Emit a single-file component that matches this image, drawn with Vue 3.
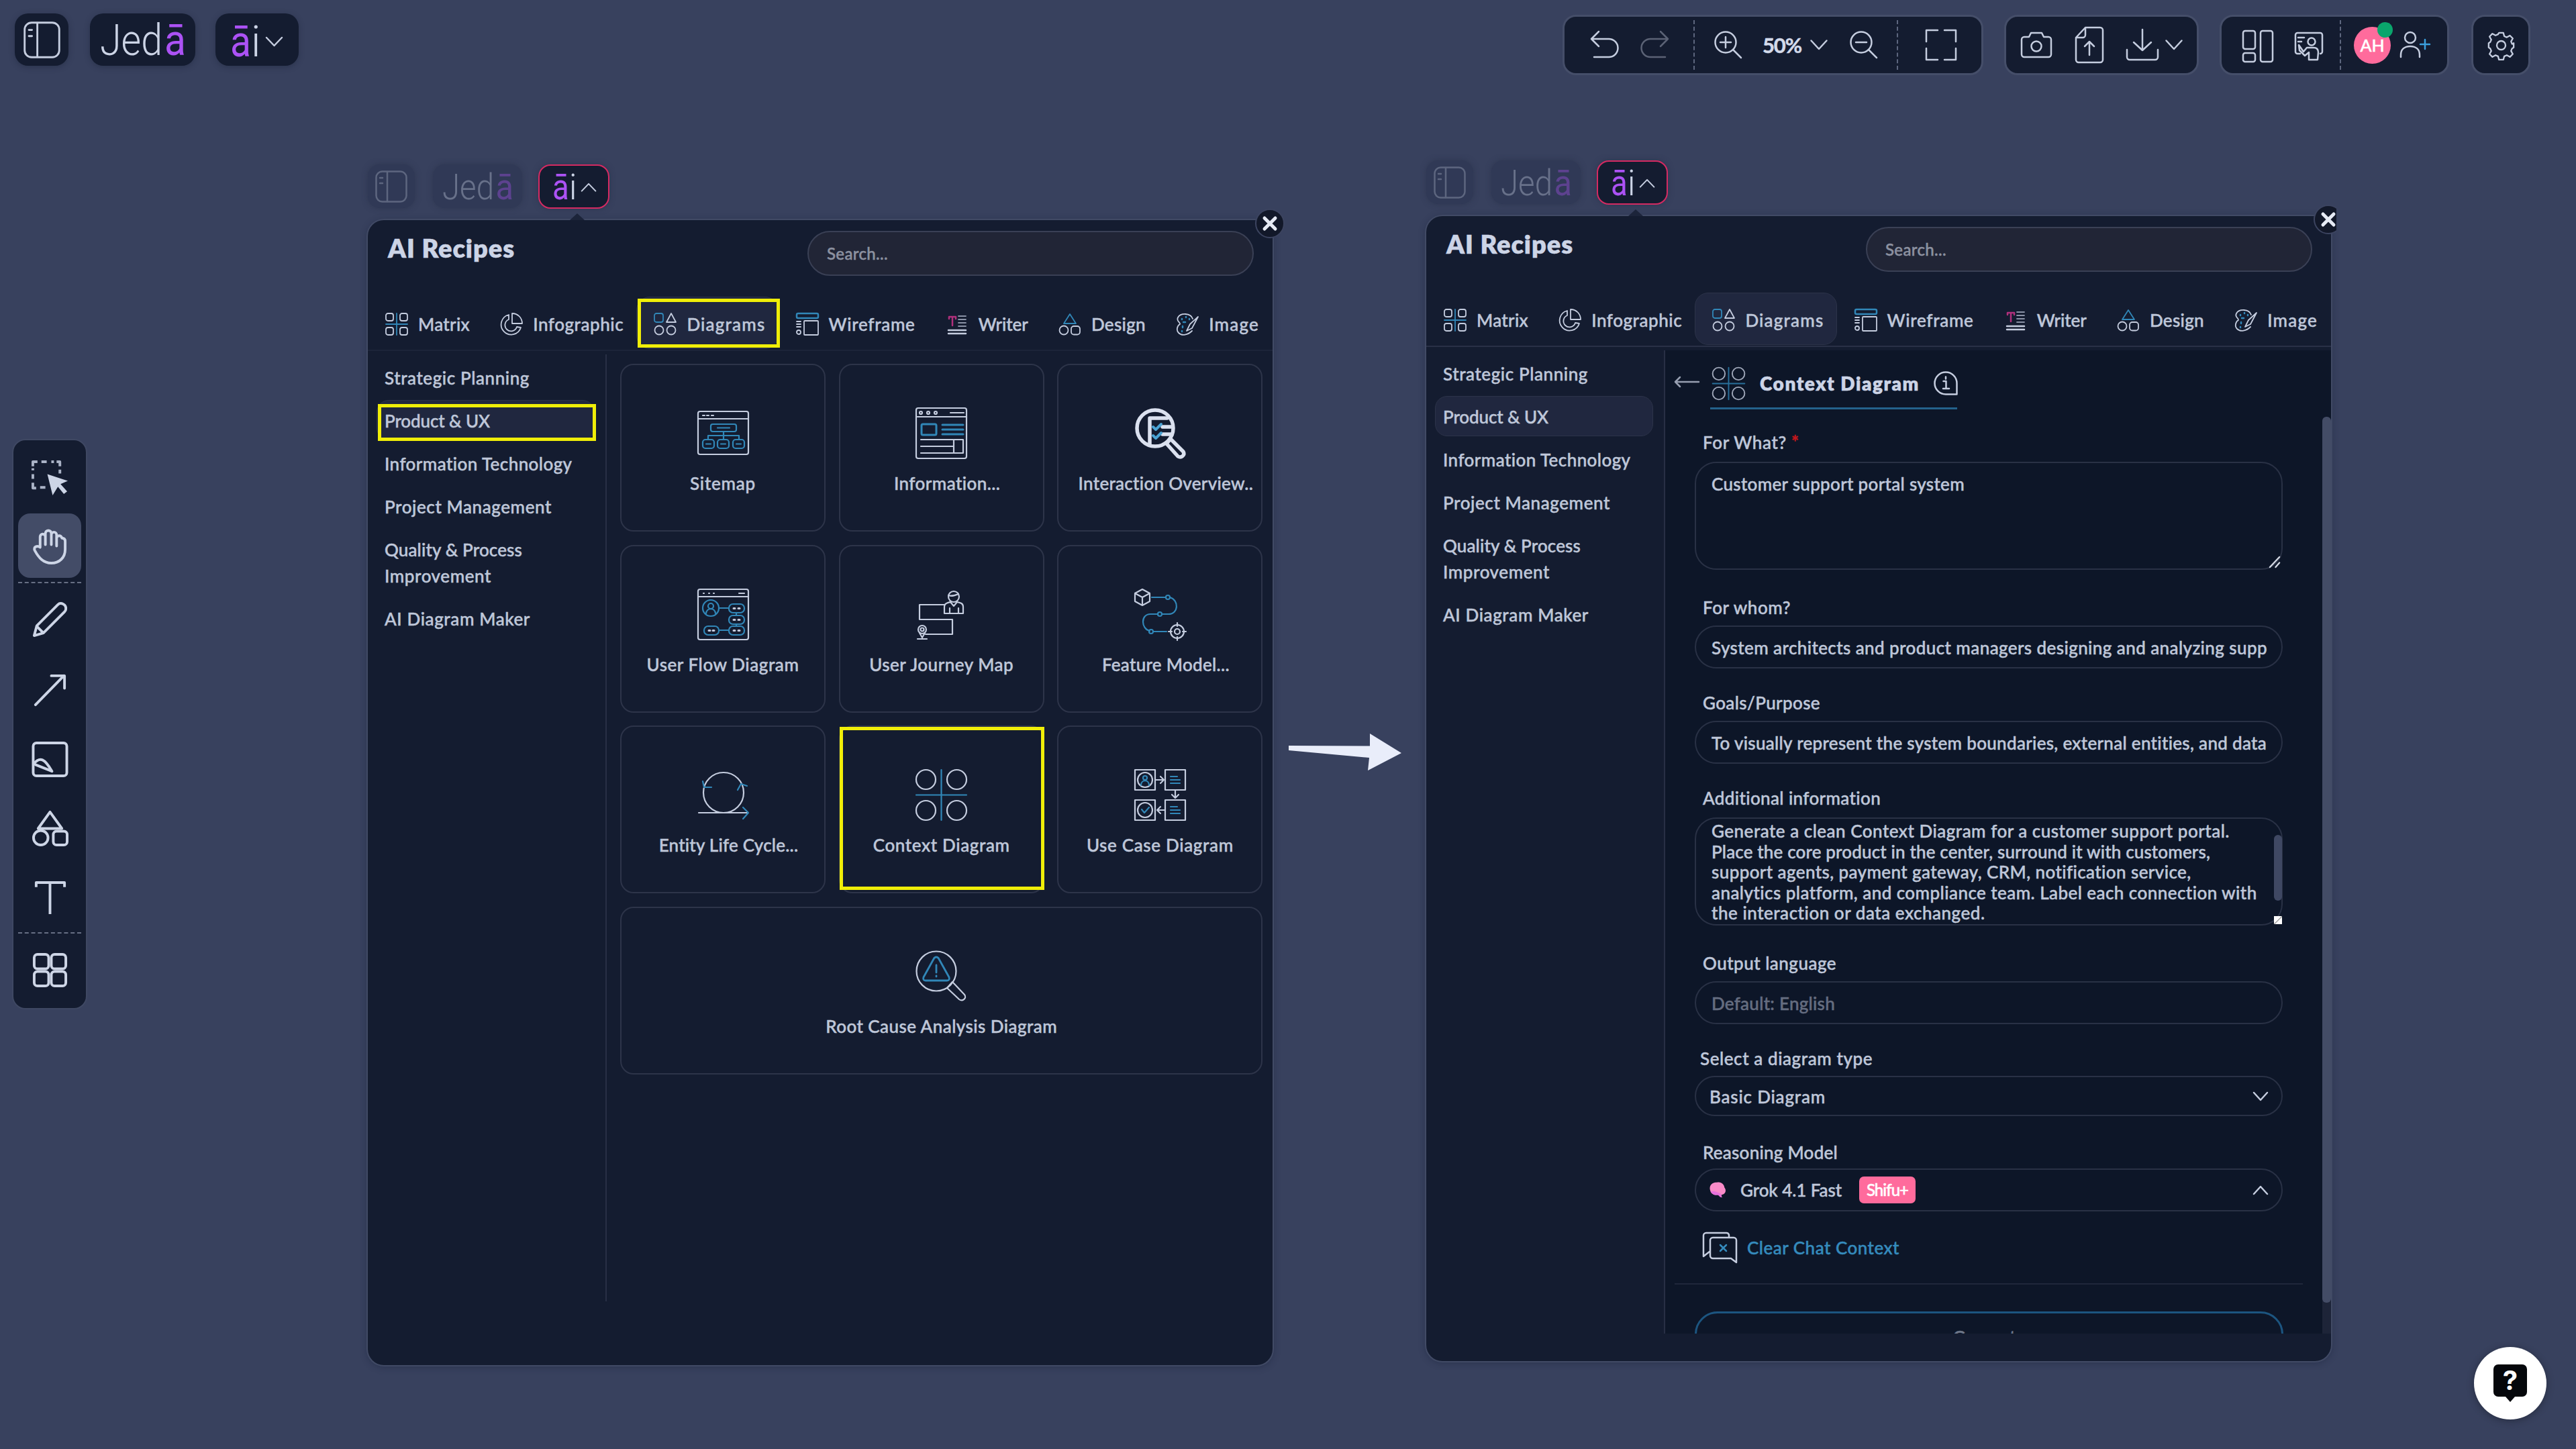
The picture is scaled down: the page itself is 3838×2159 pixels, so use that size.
<template>
  <div class="board">
    <header class="brand">
      <div class="chip chip-menu"><svg class="i55" viewBox="0 0 48 48" v-html="icons.sidebar"></svg></div>
      <div class="chip chip-logo">
        <svg class="logo" viewBox="0 0 128 70">
          <text x="0" y="58" textLength="93" lengthAdjust="spacingAndGlyphs">Jed</text>
          <text class="purple" x="96" y="58" textLength="32" lengthAdjust="spacingAndGlyphs">ā</text>
        </svg>
      </div>
      <div class="chip chip-ai">
        <svg class="ai" viewBox="0 0 80 70">
          <text class="purple" x="0" y="58" textLength="31" lengthAdjust="spacingAndGlyphs">ā</text>
          <text x="31" y="58">i</text>
          <path d="M54 30l11.500 12 11.500-12" />
        </svg>
      </div>
    </header>

    <div class="topbar">
      <div class="group g-zoom">
        <svg class="tb" viewBox="0 0 44 44" v-html="icons.undo"></svg>
        <svg class="tb dim" viewBox="0 0 44 44" v-html="icons.redo"></svg>
        <i class="vdash"></i>
        <svg class="tb" viewBox="0 0 44 44" v-html="icons.zoomIn"></svg>
        <span class="zoom"><span v-fit="58">50%</span></span>
        <svg class="chev" viewBox="0 0 26 16"><path d="M1.500 1.500L13 14 24.500 1.500" /></svg>
        <svg class="tb" viewBox="0 0 44 44" v-html="icons.zoomOut"></svg>
        <i class="vdash"></i>
        <svg class="tb-lg" viewBox="0 0 50 50" v-html="icons.expand"></svg>
      </div>
      <div class="group g-file">
        <svg class="tb-lg" viewBox="0 0 50 50" v-html="icons.camera"></svg>
        <svg class="tb-file" viewBox="0 0 44 56" v-html="icons.upload"></svg>
        <svg class="tb-lg" viewBox="0 0 50 50" v-html="icons.download"></svg>
        <svg class="chev" viewBox="0 0 26 16"><path d="M1.500 1.500L13 14 24.500 1.500" /></svg>
      </div>
      <div class="group g-team">
        <svg class="tb-lg" viewBox="0 0 50 50" v-html="icons.layout"></svg>
        <svg class="tb presenter" viewBox="0 0 44 44" v-html="icons.presenter"></svg>
        <i class="vdash tall"></i>
        <div class="avatar"><span v-fit="36">AH</span><i class="online"></i></div>
        <svg class="tb-lg invite" viewBox="0 0 50 50" v-html="icons.invite"></svg>
      </div>
      <div class="group g-gear">
        <svg viewBox="0 0 44 44" v-html="icons.gear"></svg>
      </div>
    </div>

    <nav class="tools">
      <template v-for="t in tools" :key="t.id">
        <i v-if="t.sep" class="hdash"></i>
        <div class="tool" :class="{ active: t.active }">
          <svg viewBox="0 0 56 56" v-html="icons[t.id]"></svg>
        </div>
      </template>
    </nav>

    <section v-for="p in panels" :key="p" class="shot" :class="'shot-' + p">
      <div class="mini">
        <div class="mchip mchip-menu"><svg viewBox="0 0 48 48" v-html="icons.sidebar"></svg></div>
        <div class="mchip mchip-logo">
          <svg viewBox="0 0 128 70">
            <text x="0" y="58" textLength="93" lengthAdjust="spacingAndGlyphs">Jed</text>
            <text class="purple" x="96" y="58" textLength="32" lengthAdjust="spacingAndGlyphs">ā</text>
          </svg>
        </div>
        <div class="mchip mchip-ai">
          <svg viewBox="0 0 80 70">
            <text class="purple" x="0" y="58" textLength="30" lengthAdjust="spacingAndGlyphs">ā</text>
            <text x="30" y="58">i</text>
            <path d="M53 43l12.500-13 12.500 13" />
          </svg>
        </div>
      </div>

      <div class="panel">
        <i class="notch"></i>
        <div class="close"><svg viewBox="0 0 24 24"><path d="M4 4l16 16M20 4L4 20" /></svg></div>

        <div class="head">
          <h1><span v-fit="189">AI Recipes</span></h1>
          <div class="search"><span v-fit="91">Search...</span></div>
        </div>

        <div class="tabs">
          <div v-for="t in tabs" :key="t.id" class="tab" :class="{ active: t.id === 'diagrams' }">
            <svg viewBox="0 0 34 34" v-html="icons[t.id]"></svg>
            <span v-fit="t.w">{{ t.label }}</span>
            <i v-if="p === 'list' && t.id === 'diagrams'" class="mark mark-tab"></i>
          </div>
        </div>

        <div class="body">
          <aside>
            <div v-for="c in categories" :key="c.lines[0]" class="cat" :class="{ active: c.active }">
              <div v-for="(l, i) in c.lines" :key="l"><span v-fit="c.w[i]">{{ l }}</span></div>
              <i v-if="p === 'list' && c.active" class="mark mark-cat"></i>
            </div>
          </aside>

          <div v-if="p === 'list'" class="cards">
            <div v-for="c in cards" :key="c.icon" class="card" :class="{ wide: c.wide, cut: c.cut }">
              <svg viewBox="0 0 77 77" v-html="icons[c.icon]"></svg>
              <div class="card-label"><span v-fit="c.w">{{ c.label }}</span></div>
              <i v-if="c.mark" class="mark mark-card"></i>
            </div>
          </div>

          <div v-else class="form">
            <div class="form-head">
              <svg class="back" viewBox="0 0 38 20"><path d="M37 10H2M9 3L2 10l7 7" /></svg>
              <div class="form-title">
                <svg class="i49" viewBox="0 0 77 77" v-html="icons.context"></svg>
                <h2><span v-fit="238">Context Diagram</span></h2>
                <svg class="i36" viewBox="0 0 36 36"><path d="M18 1.500A16.500 16.500 0 1 0 18 34.500H34.500V18A16.500 16.500 0 0 0 18 1.500z" /><path d="M14.500 15H18.500V26M14 26h9M18 8.500v3" /></svg>
              </div>
            </div>

            <div class="field area">
              <label><span v-fit="125">For What?</span><b class="req">*</b></label>
              <div class="box ta">
                <div><span v-fit="377">Customer support portal system</span></div>
                <svg class="grip" viewBox="0 0 18 18"><path d="M1 17L16 1M10 17l6-7" /></svg>
              </div>
            </div>
            <div class="field">
              <label><span v-fit="131">For whom?</span></label>
              <div class="box"><span v-fit="828">System architects and product managers designing and analyzing supp</span></div>
            </div>
            <div class="field">
              <label><span v-fit="175">Goals/Purpose</span></label>
              <div class="box"><span v-fit="828">To visually represent the system boundaries, external entities, and data</span></div>
            </div>
            <div class="field area">
              <label><span v-fit="266">Additional information</span></label>
              <div class="box ta long">
                <div v-for="l in info" :key="l.t"><span v-fit="l.w">{{ l.t }}</span></div>
                <i class="thumb"></i>
                <i class="corner"></i>
              </div>
            </div>
            <div class="field">
              <label><span v-fit="199">Output language</span></label>
              <div class="box muted"><span v-fit="184">Default: English</span></div>
            </div>
            <div class="field select">
              <label><span v-fit="257">Select a diagram type</span></label>
              <div class="box">
                <span v-fit="173">Basic Diagram</span>
                <svg class="caret" viewBox="0 0 24 16"><path d="M2 2l10 11L22 2" /></svg>
              </div>
            </div>
            <div class="field model">
              <label><span v-fit="201">Reasoning Model</span></label>
              <div class="box">
                <svg class="brain" viewBox="0 0 28 28">
                  <path fill="#f98bc8" d="M2 14C0 7 6 1 13 2c6-2 12 3 12 8 4 5 1 10-2 11l-3 1 1 4-3-1-3-3C8 23 3 20 2 14z" />
                  <path fill="#e870dc" d="M3 16c4 1 6-1 9 1s6 1 8 5l1 4-3-1-3-3C8 23 4 20 3 16z" />
                </svg>
                <span v-fit="151">Grok 4.1 Fast</span>
                <em><span v-fit="62">Shifu+</span></em>
                <svg class="caret" viewBox="0 0 24 16"><path d="M2 14L12 3l10 11" /></svg>
              </div>
            </div>

            <div class="clear">
              <svg viewBox="0 0 52 48"><path d="M39 8V5a4 4 0 0 0-4-3H5a4 4 0 0 0-4 4v31l9-7" /><path d="M15 9h31a4 4 0 0 1 4 4v33l-8-6H15a4 4 0 0 1-4-4V13a4 4 0 0 1 4-4z" /><path class="b" d="M26 20l9 9M35 20l-9 9" /></svg>
              <span v-fit="227">Clear Chat Context</span>
            </div>
            <hr />
            <div class="generate"><span v-fit="108">Generate</span></div>
            <i class="track"></i>
            <i class="scroll"></i>
          </div>
        </div>
      </div>
    </section>

    <svg class="arrow" viewBox="0 0 168 56"><path d="M0 18L121 18.500V0L168 29 118 55 120 36 0 25z" /></svg>

    <div class="help">
      <svg viewBox="0 0 50 56">
        <path fill="#05070b" d="M7 0H43a7 7 0 0 1 7 7V41a7 7 0 0 1-7 7H32l-7 8-7-8H7a7 7 0 0 1-7-7V7a7 7 0 0 1 7-7z" />
        <text x="25" y="38" text-anchor="middle">?</text>
      </svg>
    </div>
  </div>
</template>

<script setup>
// spreads letters so that a label takes exactly the given width
const vFit = (el, { value }) => {
  el.style.letterSpacing = '0px'
  const w = el.getBoundingClientRect().width
  el.style.letterSpacing = (value - w) / el.textContent.length + 'px'
}

const panels = ['list', 'form']

const tools = [
  { id: 'select' },
  { id: 'hand', active: true },
  { id: 'pencil', sep: true },
  { id: 'line' },
  { id: 'picture' },
  { id: 'shapes' },
  { id: 'type' },
  { id: 'apps', sep: true },
]

const tabs = [
  { id: 'matrix', label: 'Matrix', w: 77 },
  { id: 'infographic', label: 'Infographic', w: 135 },
  { id: 'diagrams', label: 'Diagrams', w: 117 },
  { id: 'wireframe', label: 'Wireframe', w: 129 },
  { id: 'writer', label: 'Writer', w: 74 },
  { id: 'design', label: 'Design', w: 81 },
  { id: 'image', label: 'Image', w: 75 },
]

const categories = [
  { lines: ['Strategic Planning'], w: [216] },
  { lines: ['Product & UX'], w: [157], active: true },
  { lines: ['Information Technology'], w: [280] },
  { lines: ['Project Management'], w: [249] },
  { lines: ['Quality & Process', 'Improvement'], w: [205, 159] },
  { lines: ['AI Diagram Maker'], w: [217] },
]

const cards = [
  { icon: 'sitemap', label: 'Sitemap', w: 98 },
  { icon: 'page', label: 'Information...', w: 159, cut: true },
  { icon: 'inspect', label: 'Interaction Overview..', w: 261, cut: true },
  { icon: 'userflow', label: 'User Flow Diagram', w: 227 },
  { icon: 'journey', label: 'User Journey Map', w: 215 },
  { icon: 'feature', label: 'Feature Model...', w: 190, cut: true },
  { icon: 'cycle', label: 'Entity Life Cycle...', w: 208, cut: true },
  { icon: 'context', label: 'Context Diagram', w: 204, mark: true },
  { icon: 'usecase', label: 'Use Case Diagram', w: 219 },
  { icon: 'rootcause', label: 'Root Cause Analysis Diagram', w: 345, wide: true },
]

const info = [
  { t: 'Generate a clean Context Diagram for a customer support portal.', w: 772 },
  { t: 'Place the core product in the center, surround it with customers,', w: 743 },
  { t: 'support agents, payment gateway, CRM, notification service,', w: 715 },
  { t: 'analytics platform, and compliance team. Label each connection with', w: 813 },
  { t: 'the interaction or data exchanged.', w: 408 },
]

const B = 'stroke="#3187b8"'
const icons = {
  sidebar: '<rect x="1.500" y="1.500" width="45" height="45" rx="9"/><path d="M18 2v44M7 11h4M7 19h4"/>',
  undo: '<path d="M14 2L3 13l11 11M3 13h26a13 13 0 0 1 0 27H7"/>',
  redo: '<path d="M30 2l11 11-11 11M41 13H15a13 13 0 0 0 0 27h22"/>',
  zoomIn: '<circle cx="18" cy="18" r="15.500"/><path d="M29 29l12 12M18 10v16M10 18h16"/>',
  zoomOut: '<circle cx="18" cy="18" r="15.500"/><path d="M29 29l12 12M10 18h16"/>',
  expand: '<path d="M3 20V3h17M30 3h17v17M47 30v17H30M20 47H3V30"/>',
  camera: '<path d="M7 13h7l3-6h16l3 6h7a4 4 0 0 1 4 4v22a4 4 0 0 1-4 4H7a4 4 0 0 1-4-4V17a4 4 0 0 1 4-4z"/><circle cx="25" cy="27" r="7.500"/>',
  upload: '<path d="M16 2h22a4 4 0 0 1 4 4v44a4 4 0 0 1-4 4H6a4 4 0 0 1-4-4V17zM16 2v11a4 4 0 0 1-4 4H2M22 43V23M15 30l7-7 7 7"/>',
  download: '<path d="M25 2v31M12 21l13 12 13-12M2 32v11a4 4 0 0 0 4 4h38a4 4 0 0 0 4-4V32"/>',
  layout: '<rect x="3" y="2" width="18" height="27" rx="3"/><rect x="3" y="35" width="18" height="13" rx="3"/><rect x="29" y="2" width="18" height="46" rx="3"/>',
  presenter: '<path d="M9 33H5a3 3 0 0 1-3-3V5a3 3 0 0 1 3-3h34a3 3 0 0 1 3 3v25a3 3 0 0 1-3 3M6 9h9M6 15h5"/><circle cx="26" cy="15" r="5.500"/><path d="M7 20l7 10 5-6h10c5 0 7 3 7 7l-1 11H22V31l-6 5-8-8z"/>',
  invite: '<circle cx="19" cy="14" r="8"/><path d="M5 43v-3c0-8 5-13 14-13s14 5 14 13v3"/><path stroke="#3ba0dd" d="M41 17v14M34 24h14"/>',
  gear: '<circle cx="22" cy="22" r="7"/><path d="M18.500 2h7l1.500 5.500 4 1.700 5-2.800 4.600 4.600-2.800 5 1.700 4L42 18.500v7L39.500 27l-1.700 4 2.800 5-4.600 4.600-5-2.800-4 1.700-1.500 5.500h-7L17 39.500l-4-1.700-5 2.800L3.400 36l2.800-5-1.700-4L2 25.500v-7L4.500 17l1.700-4-2.800-5L8 3.400l5 2.800 4-1.700z"/>',
  select: '<path stroke="#aab3c6" stroke-width="4" stroke-linecap="butt" d="M2 11V4h7M15 4h8M30 4h4M38 4h5v7M43 16v6M2 23v7M2 36v8h5M13 43h8M2 14v3"/><path fill="#cdd5e6" stroke="none" d="M24 23l31 10-11 5 10 11-5 4-9-11-8 13z"/>',
  hand: '<path d="M13 30V14a4 4 0 0 1 8 0v12V9a4 4 0 0 1 9 0v17V11a4 4 0 0 1 8 0v17V17a4 4 0 0 1 8-1c4 0 5 2 5 5v12c0 13-9 21-21 21C18 54 11 46 5 35c-3-6 4-8 8-5z"/>',
  pencil: '<path d="M4 52l4-15L40 5c4-4 13-1 12 7 0 2-1 3-2 4L18 48z"/><path d="M8 38l9 9"/>',
  line: '<path d="M6 50L49 6M30 6h20v19"/>',
  picture: '<rect x="2.500" y="3" width="51" height="50" rx="5"/><path d="M3 35c10-12 17-8 28 11L6 36"/>',
  shapes: '<path d="M28 3l18 25H10z"/><circle cx="14" cy="42" r="11"/><rect x="33" y="32" width="21" height="21" rx="5"/>',
  type: '<path stroke-linecap="butt" d="M7 12V5h43v7M28 5v48"/>',
  apps: '<rect x="4" y="4" width="22" height="22" rx="5"/><rect x="30" y="4" width="22" height="22" rx="5"/><rect x="4" y="30" width="22" height="22" rx="5"/><rect x="30" y="30" width="22" height="22" rx="5"/>',

  matrix: `<rect x="1" y="1" width="11" height="11" rx="3"/><rect x="22" y="1" width="11" height="11" rx="3"/><rect x="1" y="22" width="11" height="11" rx="3"/><rect x="22" y="22" width="11" height="11" rx="3"/><path ${B} d="M17 1v32M1 17h32"/>`,
  infographic: '<path d="M13 3A15 15 0 1 0 31 22l-6-1a9 9 0 1 1-12-11zM18 1v15h15C33 8 27 1 18 1z"/>',
  diagrams: `<rect ${B} x="1" y="1" width="13" height="13" rx="3"/><path d="M26 1l7 13H19z"/><circle cx="8" cy="26" r="6.500"/><circle cx="26" cy="26" r="6.500"/>`,
  wireframe: `<rect ${B} stroke-width="2.500" x="1" y="1" width="32" height="7" rx="2"/><rect x="12" y="12" width="21" height="21" rx="1"/><path d="M1 13h6M1 17h6M1 21h6"/><circle cx="4" cy="29" r="3"/>`,
  writer: '<path stroke="#b0307c" stroke-width="2.500" d="M5 9V6h10v3M10 6v13"/><path stroke="#8a92a6" d="M19 5h11M19 10h11M19 15h11M19 20h11"/><path stroke-width="2.500" d="M4 26h26M4 31h26"/>',
  design: `<path ${B} d="M17 2l9 14H8z"/><circle cx="8" cy="26" r="6.500"/><rect x="19" y="20" width="13" height="12.500" rx="4"/>`,
  image: `<path d="M25 9C22 0 7 0 3 7c-3 6 4 7 3 10-4 2-6 9-2 13 5 5 14 3 20-3M33 6L21 17l-5 10 8-4z"/><path ${B} stroke-width="2.500" d="M9 9v1M15 6v1M20 9v1M10 20v2M9 27v1M11 14h3"/>`,

  sitemap: `<rect x="1" y="6" width="75" height="64" rx="3"/><path d="M1 17h75M8 12h3M14 12h3M21 12h3"/><g ${B}><rect x="20" y="25" width="38" height="11" rx="3"/><path d="M30 30.500h18M39 36v12M16 48v-6h46v6"/><rect x="8" y="48" width="17" height="13" rx="4"/><rect x="30" y="48" width="17" height="13" rx="4"/><rect x="53" y="48" width="17" height="13" rx="4"/><path d="M13 54.500h7M35 54.500h7M58 54.500h7"/></g>`,
  page: `<rect x="1" y="1" width="75" height="75" rx="3"/><path d="M1 14h75M52 8h20"/><circle cx="8" cy="8" r="2"/><circle cx="19" cy="8" r="2"/><circle cx="30" cy="8" r="2"/><g ${B} stroke-width="3"><rect x="9" y="25" width="22" height="16" rx="2"/><path d="M40 26h31M40 33h31M40 40h31"/></g><path d="M8 48h48M8 58h48M8 68h48"/><rect x="57" y="48" width="14" height="20"/>`,
  inspect: '<g stroke="#dbe1ef" stroke-width="5.500"><circle cx="31" cy="31" r="27"/><path d="M23 56V16h26M42 29h15M42 40h14"/><path d="M48 54l6-7 19 19c3 5-3 10-8 7z"/></g><path stroke="#4aa3d4" stroke-width="4" d="M28 29l4 4 8-8M28 42l4 4 8-8"/>',
  userflow: `<rect x="1" y="1" width="75" height="75" rx="3"/><path d="M1 12h75M9 7h1M17 7h1M24 7h1M62 7h8"/><g ${B}><circle cx="20" cy="29" r="12"/><circle cx="20" cy="26" r="4"/><path d="M13 37c1-9 13-9 14 0M32 29h15M58 36v4M58 53v3M32 62h15"/><rect x="47" y="23" width="23" height="13" rx="6"/><rect x="47" y="40" width="23" height="13" rx="6"/><rect x="47" y="56" width="23" height="13" rx="6"/><rect x="10" y="56" width="22" height="13" rx="6"/></g><path stroke-width="3" d="M54 29.500h2M61 29.500h2M54 46.500h2M61 46.500h2M54 62.500h2M61 62.500h2M17 62.500h2M23 62.500h2"/>`,
  journey: '<circle cx="57" cy="12" r="8"/><path d="M49 10c6 2 10 0 15-2M43 37V27c0-5 5-6 9-7l5 6 5-6c5 1 9 2 9 7v10zM51 37v-8M64 37v-8M43 24H6v22h49v22H15"/><circle cx="10" cy="61" r="6"/><circle cx="10" cy="61" r="2.500"/><path d="M6 66l4 7 4-7M3 75h14"/>',
  feature: `<path d="M12 1l11 6v12l-11 6L1 19V7zM1 7l11 6 11-6M12 13v12"/><g ${B}><path d="M26 13h21M53 13c14 4 13 25-2 25H41M35 38H24c-15 0-14 22-1 25M28 64h20"/><circle cx="50" cy="13" r="3"/><circle cx="38" cy="38" r="3"/><circle cx="25" cy="64" r="3"/></g><circle cx="64" cy="64" r="10"/><circle cx="64" cy="64" r="4"/><path d="M64 51v5M64 72v5M51 64h5M72 64h5"/>`,
  cycle: `<circle cx="39" cy="35" r="30"/><path d="M2 65h72"/><path ${B} d="M8 18l2 9 11 0M60 31l5-9 9 3M68 57l8 8-8 9"/>`,
  context: `<circle cx="15.500" cy="15.500" r="14.500"/><circle cx="61.500" cy="15.500" r="14.500"/><circle cx="15.500" cy="61.500" r="14.500"/><circle cx="61.500" cy="61.500" r="14.500"/><path ${B} d="M38.500 1v75M1 38.500h75"/>`,
  usecase: `<rect x="1" y="1" width="30" height="30"/><rect x="46" y="1" width="30" height="30"/><rect x="1" y="46" width="30" height="30"/><rect x="46" y="46" width="30" height="30"/><circle cx="16" cy="16" r="11"/><circle cx="16" cy="61" r="11"/><path d="M31 16h13M39 11l5 5-5 5M61 31v12M56 38l5 5 5-5M46 61H34M39 56l-5 5 5 5"/><path ${B} d="M54 11h10M54 16h14M54 21h14M54 56h10M54 61h14M54 66h14M11 60l4 5 7-8M10 24c0-9 12-9 12 0M13 13a3 3 0 1 1 6 0 3 3 0 0 1-6 0"/>`,
  rootcause: `<circle cx="31" cy="31" r="29.500"/><path d="M47 56l8-9 18 19c4 5-3 11-8 7z"/><path ${B} stroke-width="2.800" d="M31 10c2 0 3 1 4 3l15 27c1 3 0 5-3 5H15c-3 0-4-2-3-5l15-27c1-2 2-3 4-3zM31 22v11M31 38v1"/>`,
}
</script>

<style>
body {
  background: #38415e;
}
</style>

<style scoped>
.board {
  position: relative;
  width: 3838px;
  height: 2159px;
  overflow: hidden;
  background: #38415e;
  color: #bfc7d9;
  font: 500 26px/32px Lato, 'Open Sans', sans-serif;
  -webkit-text-stroke: 0.5px currentColor;
}

.board * {
  box-sizing: border-box;
}

span {
  display: inline-block;
  white-space: pre;
}

svg {
  display: block;
  flex: none;
  fill: none;
  stroke: #c5cddf;
  stroke-width: 2.5;
  stroke-linecap: round;
  stroke-linejoin: round;
  overflow: visible;
}

svg text {
  font-family: Roboto, 'Noto Sans', sans-serif;
  font-size: 64px;
  font-weight: 300;
  fill: #ccd4e6;
  stroke: none;
  -webkit-text-stroke: 0;
}

svg text.purple {
  fill: #ac52f5;
  font-weight: 400;
}

/* brand chips */
.brand {
  position: absolute;
  left: 22px;
  top: 20px;
  display: flex;
}

.chip {
  display: flex;
  align-items: center;
  justify-content: center;
  height: 78px;
  background: #141c30;
  border-radius: 20px;
  box-shadow: 0 2px 8px rgba(20, 28, 48, 0.35);
}

.chip-menu {
  width: 80px;
  margin-right: 32px;
}

.chip-logo {
  width: 157px;
  margin-right: 30px;
}

.chip-ai {
  width: 124px;
}

.i55 {
  width: 55px;
  height: 55px;
}

.logo {
  width: 128px;
  height: 70px;
}

.ai {
  width: 80px;
  height: 70px;
  margin-top: 4px;
}

/* top toolbar */
.topbar {
  position: absolute;
  left: 2328px;
  top: 22px;
  display: flex;
}

.group {
  display: flex;
  align-items: center;
  height: 90px;
  border: 3px solid #454e69;
  border-radius: 20px;
  background: #141c30;
}

.tb {
  width: 44px;
  height: 44px;
}

.tb-lg {
  width: 50px;
  height: 50px;
}

.tb-file {
  width: 44px;
  height: 56px;
}

.dim {
  opacity: 0.4;
}

.chev {
  width: 26px;
  height: 16px;
}

.g-zoom {
  width: 627px;
  padding-left: 37px;
  margin-right: 31px;
}

.g-zoom .dim {
  margin-left: 32px;
}

.vdash {
  width: 0;
  height: 74px;
  border-left: 2px dashed #5d667e;
  margin: 0 28px 0 35px;
}

.zoom {
  width: 58px;
  margin: 0 13px 0 29px;
  font-size: 31px;
  font-weight: 700;
  line-height: 40px;
  color: #d3daea;
}

.g-zoom .chev {
  margin-right: 32px;
}

.g-zoom .vdash:nth-of-type(2) {
  margin: 0 39px 0 27px;
}

.g-file {
  width: 290px;
  padding-left: 20px;
  margin-right: 31px;
}

.g-file .tb-file {
  margin: 0 32px 0 32px;
}

.g-file .chev {
  margin-left: 9px;
}

.g-team {
  width: 342px;
  padding-left: 29px;
  margin-right: 33px;
}

.g-team .tb-lg {
  margin-top: 4px;
}

.presenter {
  margin: 4px 0 0 29px;
}

.vdash.tall {
  margin: 0 19px 0 24px;
}

.avatar {
  position: relative;
  width: 55px;
  height: 55px;
  border-radius: 50%;
  background: #ff6b9c;
  color: #fff;
  font-size: 25px;
  line-height: 55px;
  text-align: center;
}

.online {
  position: absolute;
  right: -3px;
  top: -7px;
  width: 23px;
  height: 23px;
  border-radius: 50%;
  background: #0aa56c;
}

.g-team .invite {
  margin: 0 0 0 10px;
}

.g-gear {
  width: 88px;
  justify-content: center;
}

.g-gear svg {
  width: 41px;
  height: 41px;
}

/* left toolbar */
.tools {
  position: absolute;
  left: 18px;
  top: 654px;
  width: 112px;
  height: 850px;
  padding-top: 4px;
  display: flex;
  flex-direction: column;
  align-items: center;
  background: #141c30;
  border: 2px solid #3f4863;
  border-radius: 20px;
}

.tool {
  display: flex;
  align-items: center;
  justify-content: center;
  width: 94px;
  height: 103px;
}

.tool svg {
  width: 55px;
  height: 55px;
  stroke: #cdd5e6;
  stroke-width: 4;
}

.tool.active {
  height: 96px;
  margin: 2px 0 6px;
  background: #434c67;
  border-radius: 18px;
}

.hdash {
  width: 94px;
  border-top: 2px dashed #8b93a8;
  opacity: 0.7;
}

.hdash + .tool {
  height: 108px;
}

/* pasted panels */
.shot {
  position: absolute;
  width: 1348px;
}

.shot-list {
  left: 548px;
  top: 245px;
}

.shot-form {
  left: 2125px;
  top: 239px;
}

.mini {
  display: flex;
  height: 83px;
}

.mchip {
  display: flex;
  align-items: center;
  justify-content: center;
  height: 65px;
  border-radius: 18px;
  background: #303956;
  box-shadow: 0 0 8px rgba(38, 46, 72, 0.6);
}

.mchip-menu {
  width: 70px;
  margin-right: 27px;
}

.mchip-menu svg {
  width: 48px;
  height: 48px;
  opacity: 0.3;
}

.mchip-logo {
  width: 133px;
  margin-right: 24px;
}

.mchip-logo svg {
  width: 106px;
  height: 58px;
  opacity: 0.36;
}

.mchip-ai {
  width: 106px;
  height: 66px;
  padding-left: 2px;
  background: #141c30;
  border: 2.500px solid #d52a62;
}

.mchip-ai svg {
  width: 66px;
  height: 58px;
}

.panel {
  position: relative;
  height: 1706px;
  background: #141c30;
  border-radius: 24px;
  box-shadow: 0 0 0 2px #414a65, 0 2px 10px 2px rgba(24, 31, 56, 0.35);
}

.notch {
  position: absolute;
  left: 301px;
  top: -10px;
  border: 11px solid transparent;
  border-top: 0;
  border-bottom: 10px solid #1c243a;
}

.close {
  position: absolute;
  left: 1322px;
  top: -17px;
  width: 44px;
  height: 44px;
  padding: 8px;
  border-radius: 50%;
  background: #121829;
  border: 2px solid #3c4460;
}

.shot-form .close {
  clip-path: inset(0 10px 0 0);
}

.close svg {
  width: 24px;
  height: 24px;
  stroke: #e6eaf4;
  stroke-width: 5;
}

.head {
  display: flex;
  justify-content: space-between;
  height: 114px;
  padding: 16px 28px 0 30px;
}

h1 {
  margin: 2px 0 0;
  font-size: 38px;
  line-height: 46px;
  font-weight: 800;
  color: #ccd4e6;
}

.search {
  width: 665px;
  height: 67px;
  padding-left: 27px;
  border: 2px solid #3a4055;
  border-radius: 34px;
  background: #212536;
  color: #8c91a0;
  font-size: 24px;
  line-height: 63px;
}

.tabs {
  display: flex;
  height: 81px;
  padding-left: 0;
  border-bottom: 2px solid #1c2439;
}

.shot-form .tabs {
  border-color: #293046;
}

.tab {
  position: relative;
  display: flex;
  align-items: center;
  height: 78px;
  padding: 4px 18.200px 0 25px;
  border: 1px solid transparent;
}

.tab.active {
  background: #20273f;
  border-color: #2c3349;
  border-radius: 20px;
}

.tab svg {
  width: 34px;
  height: 34px;
  margin-right: 15px;
  stroke-width: 1.8;
}

.mark {
  position: absolute;
  border: 5px solid #f0ee08;
}

.mark-tab {
  inset: 2px -3px 1px 1px;
}

.mark-cat {
  inset: 5px -3px -2px 1px;
}

.mark-card {
  inset: 0 -2px 3px -1px;
}

.body {
  display: flex;
  height: 1411px;
  margin-top: 5px;
}

.shot-form .body {
  height: 1465px;
}

aside {
  width: 356px;
  padding: 4px 16px 0 13px;
  border-right: 2px solid #282f45;
}

.cat {
  position: relative;
  margin-bottom: 4px;
  padding: 10.500px 11px 8.500px;
  line-height: 39px;
  border: 1px solid transparent;
}

.cat > div {
  height: 39px;
}

.cat.active {
  background: #20273f;
  border-color: #2c3349;
  border-radius: 18px;
}

.cards {
  display: grid;
  grid-template-columns: repeat(3, 306px);
  grid-auto-rows: 250px;
  gap: 19.700px;
  padding: 14px 0 0 20px;
}

.card {
  position: relative;
  display: flex;
  flex-direction: column;
  align-items: center;
  padding-top: 63px;
  border: 2px solid #2d3449;
  border-radius: 20px;
}

.card svg {
  width: 77px;
  height: 77px;
  stroke-width: 2.2;
}

.card.wide {
  grid-column: span 3;
}

.card-label {
  margin-top: 20px;
}

.cut .card-label {
  padding-left: 17px;
}

/* form */
.form {
  position: relative;
  flex: 1;
  overflow: hidden;
  padding-left: 44px;
  background: #0d1628;
}

.form-head {
  display: flex;
  height: 88px;
  margin-left: -31px;
  padding-top: 22px;
}

.back {
  width: 38px;
  height: 20px;
  margin: 15px 16px 0 0;
  opacity: 0.75;
}

.form-title {
  display: flex;
  align-items: center;
  width: 368px;
  height: 66px;
  padding: 0 0 9px 3px;
  border-bottom: 3px solid #24628c;
}

.i49 {
  width: 49px;
  height: 49px;
  opacity: 0.8;
}

.form-title .i49 {
  stroke-width: 3;
}

.i36 {
  width: 36px;
  height: 36px;
}

h2 {
  width: 238px;
  margin: 0 21px 0 22px;
  font-size: 28px;
  font-weight: 800;
  white-space: nowrap;
  color: #ccd4e6;
}

.field {
  height: 142px;
}

.field.area {
  height: 246px;
}

.form-head + .field {
  margin-top: 32px;
}

.field label {
  display: flex;
  height: 32px;
  padding-top: 1px;
  margin: 0 0 12px 12px;
}

.area label {
  margin-bottom: 14px;
}

.select label {
  margin: 0 0 11px 8px;
}

.req {
  margin: -1px 0 0 7px;
  color: #c4161c;
}

.box {
  position: relative;
  display: flex;
  align-items: center;
  width: 876px;
  height: 64px;
  padding: 2px 22px 0 23px;
  border: 2px solid #293145;
  border-radius: 32px;
}

.box.ta {
  display: block;
  height: 161px;
  padding-top: 16px;
  line-height: 30.500px;
}

.box.ta > div {
  height: 30.500px;
}

.box.long {
  padding-top: 3px;
}

.box.muted {
  color: #656d80;
}

.grip {
  position: absolute;
  right: 1px;
  bottom: 1px;
  width: 17px;
  height: 17px;
  stroke: #d4d9e4;
}

.thumb {
  position: absolute;
  right: -1px;
  top: 24px;
  width: 12px;
  height: 98px;
  border-radius: 6px;
  background: #3f4863;
}

.corner {
  position: absolute;
  right: -1px;
  bottom: 0;
  width: 12px;
  height: 12px;
  background: linear-gradient(135deg, #fff 45%, #9a9a9a 50%, #fff 60%);
}

.select {
  height: 140px;
}

.select .box {
  height: 60px;
  padding-left: 20px;
}

.model {
  height: 105px;
}

.model label {
  margin-bottom: 9px;
}

.model .box {
  padding: 0 22px 0 18px;
}

.caret {
  width: 24px;
  height: 16px;
  margin-left: auto;
  margin-right: -3px;
}

.brain {
  width: 28px;
  height: 26px;
  margin-right: 20px;
  stroke: none;
}

em {
  height: 40px;
  margin-left: 26px;
  padding: 0 11px;
  border-radius: 7px;
  background: #ff6b9c;
  color: #fff;
  font-style: normal;
  font-size: 24px;
  line-height: 39px;
}

.clear {
  display: flex;
  align-items: center;
  height: 48px;
  margin: 30px 0 0 12px;
  color: #358bbd;
}

.clear svg {
  width: 52px;
  height: 48px;
  margin-right: 14px;
}

.clear .b {
  stroke: #358bbd;
}

hr {
  width: 936px;
  height: 2px;
  margin: 29px 0 40px -30px;
  border: 0;
  background: #1f273b;
}

.generate {
  width: 877px;
  height: 70px;
  padding-top: 19px;
  border: 3px solid #1c5580;
  border-radius: 34px;
  text-align: center;
}

.generate span {
  opacity: 0.55;
}

.track,
.scroll {
  position: absolute;
  right: 0;
  width: 13px;
  background: #434c66;
}

.scroll {
  top: 99px;
  height: 1320px;
  border-radius: 6px;
}

.track {
  bottom: 0;
  height: 56px;
  background: #1d2438;
}

.arrow {
  position: absolute;
  left: 1920px;
  top: 1093px;
  width: 168px;
  height: 56px;
  fill: #e9edfa;
  stroke: none;
}

.help {
  position: absolute;
  left: 3686px;
  top: 2007px;
  width: 108px;
  height: 108px;
  display: flex;
  align-items: center;
  justify-content: center;
  border-radius: 50%;
  background: #fff;
  box-shadow: 0 2px 12px rgba(0, 0, 0, 0.3);
}

.help svg {
  width: 50px;
  height: 56px;
  stroke: none;
}

.help text {
  font: 700 40px Inter, sans-serif;
  fill: #fff;
}
</style>
